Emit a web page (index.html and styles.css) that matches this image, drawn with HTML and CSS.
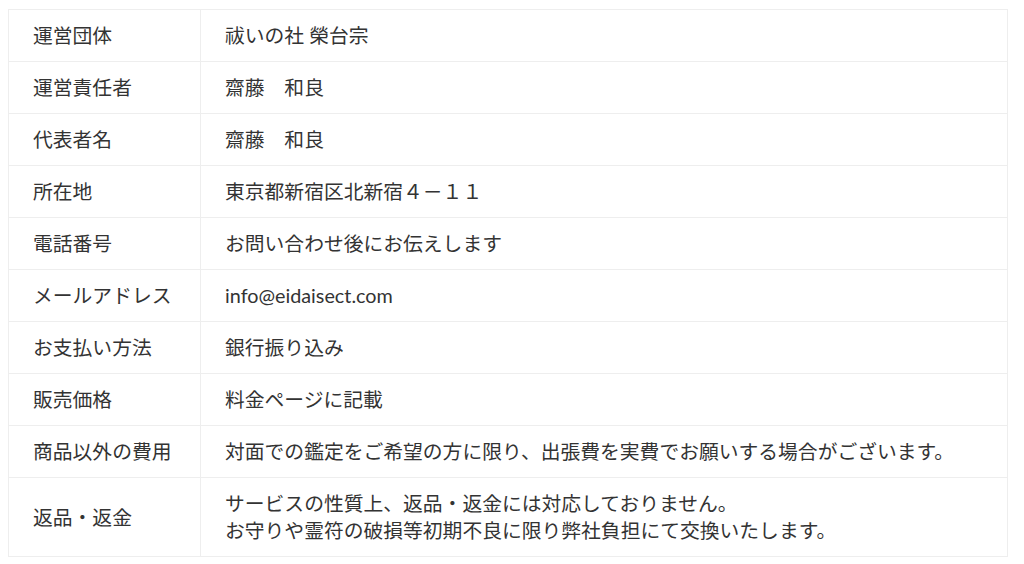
FILE: index.html
```html
<!DOCTYPE html>
<html lang="ja">
<head>
  <meta charset="UTF-8" />
  <meta name="viewport" content="width=device-width, initial-scale=1.0"/>
  <title>特定商取引法に基づく表記</title>
  <link rel="stylesheet" href="styles.css">
</head>
<body>

  <div class="wrap">
    <table class="info-table">
      <tr>
        <th>運営団体</th>
        <td>祓いの社 榮台宗</td>
      </tr>
      <tr>
        <th>運営責任者</th>
        <td>齋藤　和良</td>
      </tr>
      <tr>
        <th>代表者名</th>
        <td>齋藤　和良</td>
      </tr>
      <tr>
        <th>所在地</th>
        <td>東京都新宿区北新宿４－１１</td>
      </tr>
      <tr>
        <th>電話番号</th>
        <td>お問い合わせ後にお伝えします</td>
      </tr>
      <tr>
        <th>メールアドレス</th>
        <td>info@eidaisect.com</td>
      </tr>
      <tr>
        <th>お支払い方法</th>
        <td>銀行振り込み</td>
      </tr>
      <tr>
        <th>販売価格</th>
        <td>料金ページに記載</td>
      </tr>
      <tr>
        <th>商品以外の費用</th>
        <td>対面での鑑定をご希望の方に限り、出張費を実費でお願いする場合がございます。</td>
      </tr>
      <tr>
        <th>返品・返金</th>
        <td>サービスの性質上、返品・返金には対応しておりません。<br>お守りや霊符の破損等初期不良に限り弊社負担にて交換いたします。</td>
      </tr>
    </table>
  </div>

</body>
</html>
```

FILE: styles.css
```css
html, body {
  margin: 0;
  padding: 0;
  background-color: white;
  font-family: Lato, "Noto Sans CJK JP", sans-serif;
  color: #333;
}

.wrap {
  padding: 9px 16px 8px 8px;
}

.info-table {
  width: 1000px;
  border-collapse: collapse;
  font-size: 19.8px;
  line-height: 27px;
}

.info-table th,
.info-table td {
  border: 1px solid #eeeeee;
  padding: 12px 24px;
  text-align: left;
  vertical-align: middle;
}

.info-table th {
  width: 143px;
  font-weight: normal;
}
```
